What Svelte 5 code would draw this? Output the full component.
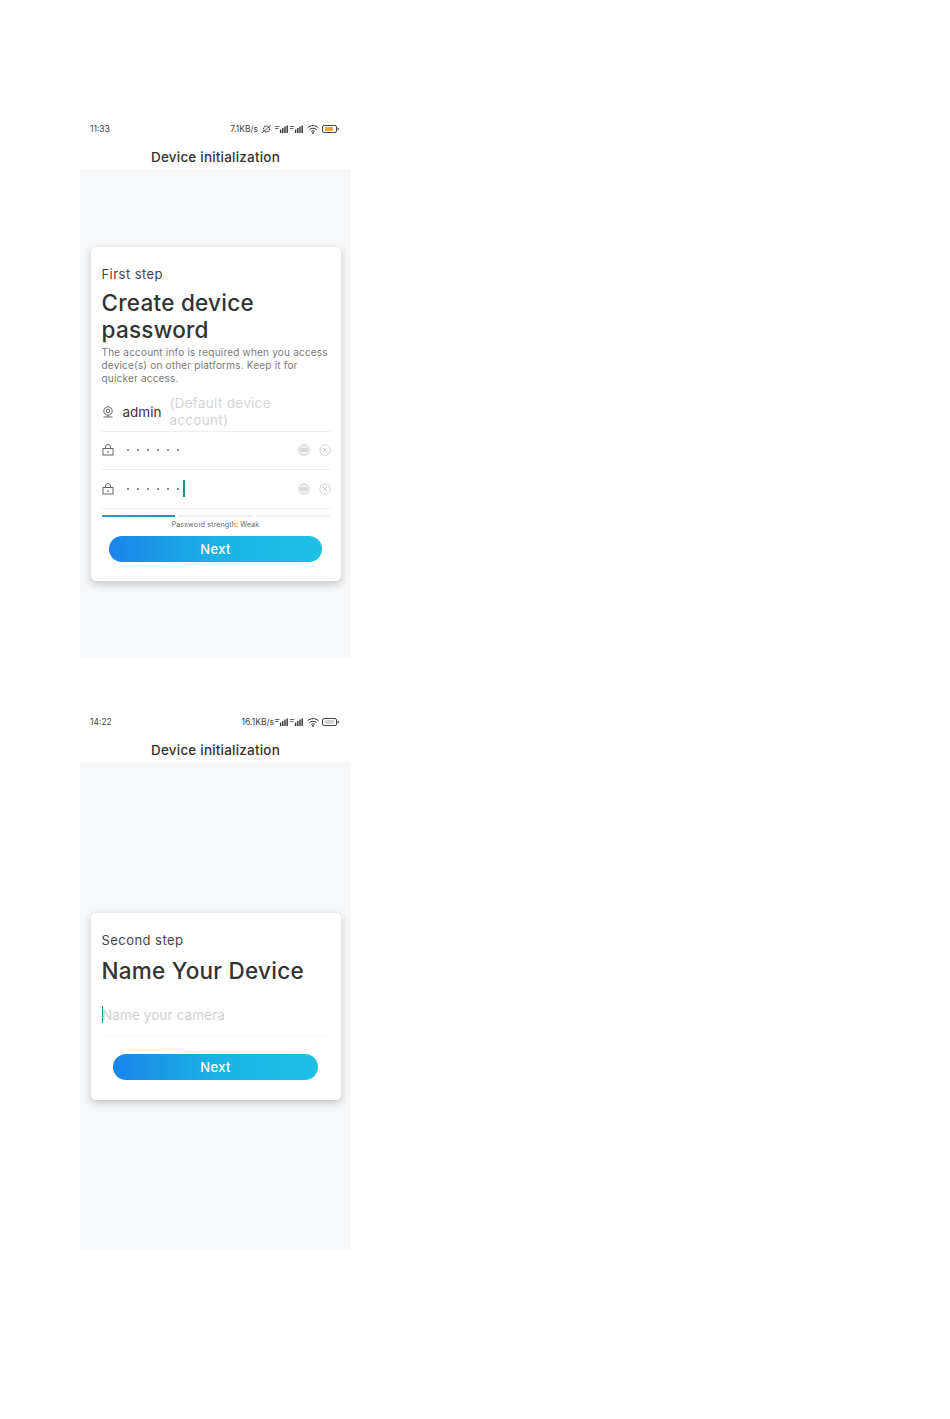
<script>
</script>

{#snippet signal()}
  <svg class="sig" viewBox="0 0 14 8" width="14" height="8" aria-hidden="true">
    <path d="M0 1.5h4.5M0 3.5h3.5" stroke="#666" stroke-width="1" />
    <path d="M5.6 8V4.5M7.8 8V3M10 8V1.5M12.2 8V.5" stroke="#333" stroke-width="1.4" />
  </svg>
{/snippet}

{#snippet wifi()}
  <svg viewBox="0 0 12 9" width="12" height="9" aria-hidden="true">
    <path d="M.6 2.8C3.6-.1 8.4-.1 11.4 2.8M2.4 4.7c2-1.9 5.2-1.9 7.2 0M4.2 6.5c1-1 2.6-1 3.6 0" fill="none" stroke="#333" stroke-width="1" />
    <circle cx="6" cy="8" r=".9" fill="#333" />
  </svg>
{/snippet}

{#snippet battery(fill, level)}
  <svg viewBox="0 0 18 8" width="18" height="8" aria-hidden="true">
    <rect x=".5" y=".5" width="14" height="7" rx="1.5" fill="none" stroke="#444" />
    <rect x="3" y="2" width={level} height="4" fill={fill} />
    <path d="M15.5 2.5l2 1.5-2 1.5z" fill="#444" />
  </svg>
{/snippet}

{#snippet lock()}
  <svg class="lock" viewBox="0 0 12 12" width="12" height="12" aria-hidden="true">
    <rect x="1" y="4.5" width="10" height="6.5" fill="none" stroke="#666" />
    <path d="M3.5 4.5V3a2.5 2.5 0 0 1 5 0v1.5" fill="none" stroke="#666" />
    <rect x="5.5" y="7" width="1" height="2" fill="#555" />
  </svg>
{/snippet}

{#snippet eye()}
  <svg viewBox="0 0 12 12" width="12" height="12" aria-hidden="true">
    <circle cx="6" cy="6" r="5.2" fill="#f2f2f2" stroke="#c4c4c4" stroke-width=".8" />
    <path d="M2.6 5h6.8M2.6 7h6.8" stroke="#999" stroke-width=".9" stroke-dasharray="1.2 .7" />
  </svg>
{/snippet}

{#snippet clear()}
  <svg viewBox="0 0 12 12" width="12" height="12" aria-hidden="true">
    <circle cx="6" cy="6" r="5.2" fill="none" stroke="#cfcfcf" stroke-width=".9" />
    <path d="M4 4l4 4M8 4l-4 4" stroke="#c4c4c4" stroke-width=".9" />
  </svg>
{/snippet}

{#snippet dots()}
  <span class="dots"><i></i><i></i><i></i><i></i><i></i><i></i></span>
{/snippet}

<main class="page">
  <section class="phone">
    <header class="top">
      <div class="status">
        <span class="time">11:33</span>
        <span class="tray">
          <span class="speed">7.1KB/s</span>
          <svg viewBox="0 0 12 10" width="11" height="10" aria-hidden="true">
            <circle cx="6" cy="5" r="3.2" fill="none" stroke="#444" stroke-width="1.4" stroke-dasharray="1.6 .8" />
            <path d="M1 9.5L11 .5" stroke="#444" stroke-width=".9" />
          </svg>
          {@render signal()}
          {@render signal()}
          {@render wifi()}
          {@render battery('#f0a92c', 8)}
        </span>
      </div>
      <h1>Device initialization</h1>
    </header>
    <div class="body">
      <div class="card first">
        <p class="step">First step</p>
        <h2>Create device password</h2>
        <p class="desc">The account info is required when you access device(s) on other platforms. Keep it for quicker access.</p>
        <div class="row account">
          <svg class="cam" viewBox="0 0 12 12" width="12" height="12" aria-hidden="true">
            <circle cx="6" cy="5" r="4.2" fill="none" stroke="#555" stroke-width=".9" />
            <circle cx="6" cy="5" r="1.8" fill="none" stroke="#555" stroke-width=".9" />
            <path d="M1.5 11h9M6 9.2V11" stroke="#555" stroke-width=".9" />
          </svg>
          <span class="admin">admin</span>
          <span class="hint">(Default device account)</span>
        </div>
        <div class="row pass">
          {@render lock()}
          {@render dots()}
          <span class="tools">{@render eye()}{@render clear()}</span>
        </div>
        <div class="row pass">
          {@render lock()}
          {@render dots()}
          <span class="caret tall"></span>
          <span class="tools">{@render eye()}{@render clear()}</span>
        </div>
        <div class="meter"><span class="on"></span><span></span><span></span></div>
        <p class="strength">Password strength: Weak</p>
        <button class="next wide" type="button">Next</button>
      </div>
    </div>
  </section>

  <section class="phone second">
    <header class="top">
      <div class="status">
        <span class="time">14:22</span>
        <span class="tray">
          <span class="speed">16.1KB/s</span>
          {@render signal()}
          {@render signal()}
          {@render wifi()}
          {@render battery('#d0d0d0', 9)}
        </span>
      </div>
      <h1>Device initialization</h1>
    </header>
    <div class="body">
      <div class="card">
        <p class="step">Second step</p>
        <h2 class="name">Name Your Device</h2>
        <div class="field"><span class="caret"></span><span class="placeholder">Name your camera</span></div>
        <button class="next narrow" type="button">Next</button>
      </div>
    </div>
  </section>
</main>

<style>
  :global(body) {
    margin: 0;
    background: #fff;
  }
  .page {
    box-sizing: border-box;
    width: 950px;
    height: 1419px;
    padding: 117px 0 0 80px;
    font-family: Inter, "DejaVu Sans", sans-serif;
    color: #333;
  }
  .phone {
    width: 271px;
  }
  .second {
    margin-top: 53px;
  }
  .top {
    height: 52px;
    box-sizing: border-box;
    padding-top: 6px;
  }
  .second .top {
    padding-top: 5px;
  }
  .status {
    display: flex;
    justify-content: space-between;
    align-items: center;
    height: 12px;
    padding: 0 11px 0 10px;
    font-size: 8.5px;
    color: #444;
  }
  .tray {
    display: flex;
    align-items: center;
    gap: 3px;
  }
  .sig + .sig {
    margin-left: -2px;
  }
  .second .speed {
    margin-right: -2px;
  }
  h1 {
    margin: 13px 0 0;
    font-size: 13.5px;
    line-height: 18px;
    font-weight: 500;
    text-align: center;
    letter-spacing: .2px;
    color: #333;
  }
  .body {
    height: 489px;
    background: #f6f8fa;
    display: flex;
    align-items: center;
    justify-content: center;
  }
  .second .body {
    height: 487px;
  }
  .card {
    box-sizing: border-box;
    width: 250px;
    background: #fff;
    border-radius: 5px;
    padding: 18px 11px 20px;
    box-shadow: 0 3px 8px rgba(0, 0, 0, .22);
  }
  .first {
    padding-bottom: 19px;
  }
  .step {
    margin: 0;
    font-size: 13px;
    line-height: 18px;
    letter-spacing: .45px;
    color: #444;
  }
  h2 {
    margin: 6px 0 0;
    font-size: 22.5px;
    line-height: 27px;
    font-weight: 500;
    color: #333;
    letter-spacing: .25px;
  }
  h2.name {
    margin-top: 7px;
    line-height: 30px;
  }
  .desc {
    margin: 3px 0 0;
    font-size: 10px;
    line-height: 13px;
    letter-spacing: .2px;
    color: #7a7a7a;
  }
  .row {
    display: flex;
    align-items: center;
    border-bottom: 1px solid #eeeeee;
  }
  .account {
    box-sizing: border-box;
    height: 40px;
    padding-top: 2px;
    margin-top: 7px;
  }
  .cam {
    margin: 0 8px 0 0;
    flex: none;
  }
  .admin {
    font-size: 13.5px;
    color: #333;
    flex: none;
    margin: 0 8px 0 1px;
  }
  .hint {
    width: 125px;
    font-size: 13.5px;
    line-height: 17px;
    letter-spacing: .3px;
    color: #d4d4d4;
  }
  .pass {
    height: 37px;
  }
  .pass + .pass {
    height: 38px;
  }
  .lock {
    margin: 0 13px 0 0;
    flex: none;
  }
  .dots {
    display: flex;
    gap: 8px;
  }
  .dots i {
    width: 2px;
    height: 2px;
    border-radius: 50%;
    background: #666;
  }
  .tools {
    margin: 0 -1px 0 auto;
    display: flex;
    gap: 9px;
  }
  .caret {
    display: block;
    width: 2px;
    height: 17px;
    background: #1f8f86;
    flex: none;
  }
  .tall {
    margin-left: 4px;
  }
  .meter {
    display: flex;
    gap: 4px;
    margin-top: 6px;
  }
  .meter span {
    flex: 1;
    height: 2px;
    background: #eceeef;
  }
  .meter .on {
    background: linear-gradient(90deg, #2a9fd0, #1d93a8);
  }
  .strength {
    margin: 3px 0 0;
    font-size: 7px;
    line-height: 9px;
    text-align: center;
    letter-spacing: .15px;
    color: #666;
  }
  .next {
    display: block;
    height: 26px;
    border: 0;
    border-radius: 13px;
    background: linear-gradient(90deg, #1a84ea 0%, #1bb4e3 52%, #1cc1e4 100%);
    color: #fff;
    font: 500 13px/26px Inter, "DejaVu Sans", sans-serif;
    letter-spacing: .4px;
    padding: 0;
  }
  .wide {
    width: 213px;
    margin: 7px auto 0;
  }
  .narrow {
    width: 205px;
    margin: 18px auto 0;
  }
  .field {
    display: flex;
    align-items: center;
    height: 41px;
    margin-top: 8px;
    border-bottom: 1px solid #f8f8f8;
  }
  .field .caret {
    height: 17px;
    width: 1.5px;
  }
  .placeholder {
    margin-left: -1px;
    font-size: 13.5px;
    color: #cfcfcf;
    letter-spacing: .1px;
  }
</style>
